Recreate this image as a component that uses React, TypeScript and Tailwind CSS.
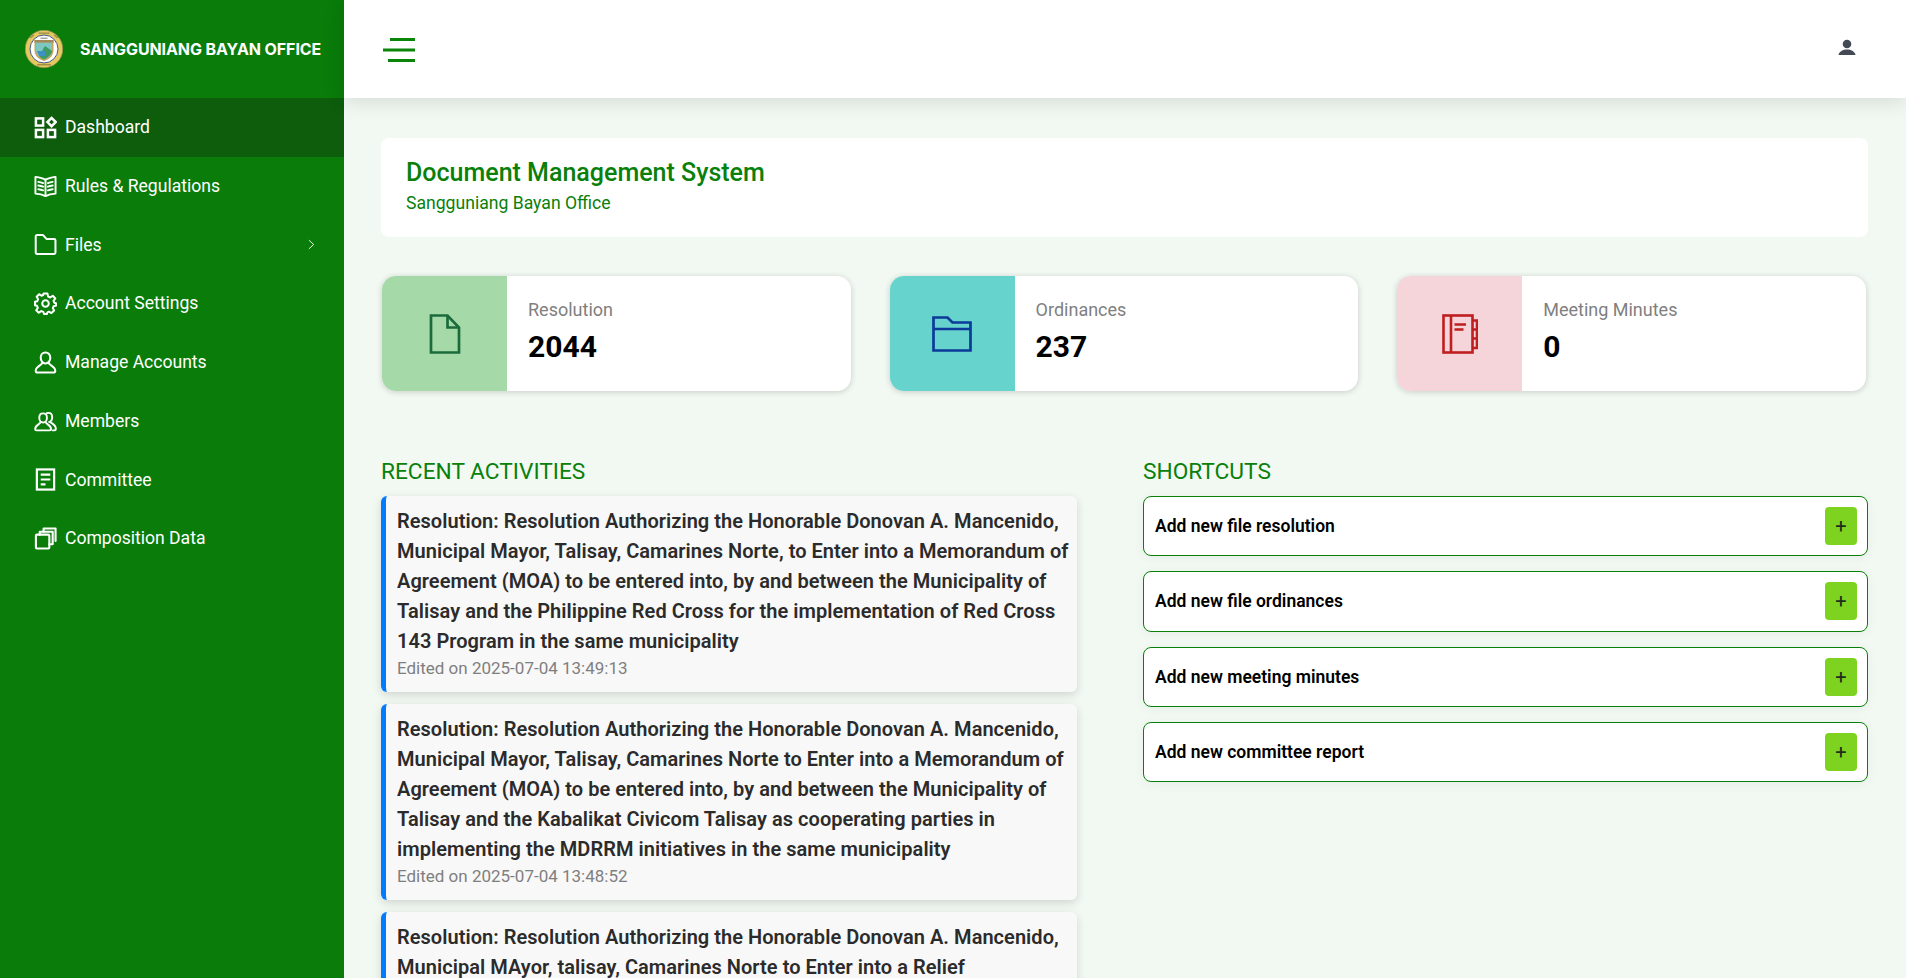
import React from "react";

const S = { fill: "none", stroke: "currentColor", strokeWidth: 2, strokeLinejoin: "round" as const, strokeLinecap: "round" as const };
const box = "w-[23px] h-[23px] shrink-0";

const IDash = () => (
  <svg viewBox="0 0 24 24" className={box} {...S} strokeWidth={2.6} strokeLinejoin="miter">
    <rect x="2" y="2.500" width="7.500" height="7.500" />
    <rect x="2" y="14.500" width="7.500" height="7.500" />
    <rect x="14.500" y="14.500" width="7.500" height="7.500" />
    <path d="M18.300 2 22.600 6.300 18.300 10.600 14 6.300Z" />
  </svg>
);
const IBook = () => (
  <svg viewBox="0 0 24 24" className={box} {...S} strokeWidth={2}>
    <path d="M12 5C9 3.200 5.500 2.600 1.500 2V19.400C5.500 19.600 9 20.400 12 22 15 20.400 18.500 19.600 22.500 19.400V2C18.500 2.600 15 3.200 12 5Z" />
    <path d="M12 5V22" />
    <path d="M4.500 7.200C6.500 7.400 8 7.800 9.500 8.400M4.500 11C6.500 11.200 8 11.600 9.500 12.200M4.500 14.800C6.500 15 8 15.400 9.500 16M19.500 7.200C17.500 7.400 16 7.800 14.500 8.400M19.500 11C17.500 11.200 16 11.600 14.500 12.200M19.500 14.800C17.500 15 16 15.400 14.500 16" />
  </svg>
);
const IFolder = () => (
  <svg viewBox="0 0 24 24" className={box} {...S} strokeWidth={2.100}>
    <path d="M1.800 3.500C1.800 2.700 2.400 2 3.200 2H9.200L13 6.200H21C21.800 6.200 22.400 6.900 22.400 7.700V20.300C22.400 21.100 21.800 21.800 21 21.800H3.200C2.400 21.800 1.800 21.100 1.800 20.300Z" />
  </svg>
);
const IGear = () => (
  <svg viewBox="0 0 24 24" className={box} {...S} strokeWidth={2.100}>
    <circle cx="12" cy="12" r="3.400" />
    <path d="M10 1.500H14L14.700 4.700 16.900 5.700 19.600 3.900 22.200 6.700 20.400 9.300 21.200 11.200 23 11.800V14.200L20.500 14.800 19.700 16.900 21 19.400 18.200 22 15.600 20.500 14 21.200 13.500 23H10.500L9.800 20.800 7.600 19.900 5 21.600 2.300 19 4 16.500 3.100 14.400 1 13.800V10.200L3.400 9.600 4.300 7.500 2.800 5 5.400 2.300 7.800 3.900 9.600 3.100Z" />
  </svg>
);
const IUser = () => (
  <svg viewBox="0 0 24 24" className={box} {...S} strokeWidth={2.100}>
    <path d="M12 1.500C8.900 1.500 7 4 7 7 7 9.800 8.800 13 12 13 15.200 13 17 9.800 17 7 17 4 15.100 1.500 12 1.500Z" />
    <path d="M8.800 12C8.800 14.800 2 15.400 1.800 20.500 1.800 21.600 2.400 22.400 3.400 22.400H20.600C21.600 22.400 22.200 21.600 22.200 20.500 22 15.400 15.200 14.800 15.200 12" />
  </svg>
);
const IMembers = () => (
  <svg viewBox="0 0 24 24" className={box} {...S} strokeWidth={2}>
    <path d="M9.500 3.500C7 3.500 5.500 5.500 5.500 8 5.500 10.500 7 13 9.500 13 12 13 13.500 10.500 13.500 8 13.500 5.500 12 3.500 9.500 3.500Z" />
    <path d="M6.800 12.500C6.800 14.800 1.300 15.500 1.200 19.800 1.200 20.800 1.800 21.300 2.600 21.300H16.400C17.200 21.300 17.800 20.800 17.800 19.800 17.700 15.500 12.200 14.800 12.200 12.500" />
    <path d="M13.500 3.300C13.900 3.100 14.500 3 15 3 17.500 3 19 5 19 7.500 19 9.700 17.800 12 15.800 12.500" />
    <path d="M16.800 12.500C18 14 22.800 15 22.800 19.800 22.800 20.800 22.200 21.300 21.400 21.300H19.500" />
  </svg>
);
const ICommittee = () => (
  <svg viewBox="0 0 24 24" className={box} {...S} strokeWidth={2.300} strokeLinejoin="miter" strokeLinecap="butt">
    <rect x="3" y="1.500" width="18" height="21" />
    <path d="M7 7H17M7 12H17M7 17H12" />
  </svg>
);
const ICopies = () => (
  <svg viewBox="0 0 24 24" className={box} {...S} strokeWidth={2.200}>
    <rect x="2" y="8" width="14" height="14.500" rx="1" />
    <path d="M6 8V5H19.500V18H16" />
    <path d="M10 4.800V1.500H22.500V14.500" />
  </svg>
);

const Logo = () => (
  <svg viewBox="0 0 38 38" className="w-[38px] h-[38px] shrink-0">
    <circle cx="19" cy="19" r="18.800" fill="#e6c95e" />
    <circle cx="19" cy="19" r="18.800" fill="none" stroke="#8f8a55" strokeWidth="0.700" />
    <circle cx="19" cy="19" r="14" fill="#ffffff" stroke="#46568c" strokeWidth="1" />
    <path d="M9.500 10H28.500V20C28.500 26 24 29.500 19 31 14 29.500 9.500 26 9.500 20Z" fill="#c5a35a" />
    <path d="M11 12.500H27V20C27 25 23 28 19 29.500 15 28 11 25 11 20Z" fill="#7cc7c2" />
    <path d="M20 16 27 21V22C25 26 22 28 19 29.500 17 28.500 15 27.500 14 26Z" fill="#3f9a63" />
    <path d="M12 21H20V26H14Z" fill="#3d8fc5" />
    <path d="M9.500 10H28.500V12.500H9.500Z" fill="#a3895a" />
    <path d="M13.500 2.500H24.500V3.800H13.500Z" fill="#5a5a3c" opacity="0.550" />
    <path d="M5 8 9 5M29 5 33 8" stroke="#6a6640" strokeWidth="1.300" opacity="0.600" />
    <path d="M12 34H26V35.500H12Z" fill="#7a6a3c" opacity="0.600" />
    <path d="M15.500 7.500H22.500V9H15.500Z" fill="#6a6a6a" opacity="0.600" />
  </svg>
);

const IDoc = () => (
  <svg viewBox="0 0 32 40" className="w-[32px] h-[40px]" fill="none" stroke="#1b6b3c" strokeWidth="2.700" strokeLinejoin="miter">
    <path d="M2 1.500H18.500L30 13.500V38.500H2Z" />
    <path d="M18.500 1.500V13.500H30" />
  </svg>
);
const IFolder2 = () => (
  <svg viewBox="0 0 40 36" className="w-[40px] h-[36px]" fill="none" stroke="#0b3a9a" strokeWidth="2.700" strokeLinejoin="miter">
    <path d="M1.500 1.500H15.500L20.500 6.500H38.500V34.500H1.500Z" />
    <path d="M1.500 13H38.500" />
  </svg>
);
const INote = () => (
  <svg viewBox="0 0 36 40" className="w-[36px] h-[40px]" fill="none" stroke="#bf1f1f" strokeWidth="2.600" strokeLinejoin="miter">
    <rect x="1.500" y="1.500" width="29" height="37" />
    <path d="M9 1.500V38.500" />
    <path d="M12.500 10.500H24M12.500 15.500H21.500" />
    <path d="M30.500 6.500H35V34H30.500M30.500 15.500H35M30.500 24.500H35" />
  </svg>
);

const nav: [string, React.ReactNode, boolean?, boolean?][] = [
  ["Dashboard", <IDash />, true],
  ["Rules & Regulations", <IBook />],
  ["Files", <IFolder />, false, true],
  ["Account Settings", <IGear />],
  ["Manage Accounts", <IUser />],
  ["Members", <IMembers />],
  ["Committee", <ICommittee />],
  ["Composition Data", <ICopies />],
];

const stats: [string, string, string, React.ReactNode][] = [
  ["Resolution", "2044", "bg-[#a5d9a7]", <IDoc />],
  ["Ordinances", "237", "bg-[#67d3cd]", <IFolder2 />],
  ["Meeting Minutes", "0", "bg-[#f6d5da]", <INote />],
];

const activities: [string, string][] = [
  [
    "Resolution: Resolution Authorizing the Honorable Donovan A. Mancenido, Municipal Mayor, Talisay, Camarines Norte, to Enter into a Memorandum of Agreement (MOA) to be entered into, by and between the Municipality of Talisay and the Philippine Red Cross for the implementation of Red Cross 143 Program in the same municipality",
    "Edited on 2025-07-04 13:49:13",
  ],
  [
    "Resolution: Resolution Authorizing the Honorable Donovan A. Mancenido, Municipal Mayor, Talisay, Camarines Norte to Enter into a Memorandum of Agreement (MOA) to be entered into, by and between the Municipality of Talisay and the Kabalikat Civicom Talisay as cooperating parties in implementing the MDRRM initiatives in the same municipality",
    "Edited on 2025-07-04 13:48:52",
  ],
  [
    "Resolution: Resolution Authorizing the Honorable Donovan A. Mancenido, Municipal MAyor, talisay, Camarines Norte to Enter into a Relief",
    "",
  ],
];

const shortcuts = ["Add new file resolution", "Add new file ordinances", "Add new meeting minutes", "Add new committee report"];

export default function App() {
  return (
    <div className="flex h-screen overflow-hidden bg-[#f2f8f2] font-['Roboto',sans-serif]">
      <aside className="w-[344px] shrink-0 bg-[#097c0a] text-white">
        <div className="h-[98px] flex items-center pl-[25px] gap-[17px]">
          <Logo />
          <span className="font-['Inter',sans-serif] font-bold text-[16px] tracking-[-0.1px] whitespace-nowrap">SANGGUNIANG BAYAN OFFICE</span>
        </div>
        <nav>
          {nav.map(([label, icon, active, chev]) => (
            <div key={label} className={`h-[58.750px] flex items-center pl-[34px] pr-[29px] gap-[8px] text-[17.6px] tracking-[-0.02px] ${active ? "bg-[#0d5d0c]" : ""}`}>
              {icon}
              <span className="flex-1">{label}</span>
              {chev && (
                <svg viewBox="0 0 8 12" className="w-[7px] h-[11px]" fill="none" stroke="currentColor" strokeWidth="1">
                  <path d="M1 1 6.500 6 1 11" />
                </svg>
              )}
            </div>
          ))}
        </nav>
      </aside>
      <div className="flex-1 min-w-0 flex flex-col">
        <header className="relative z-10 h-[98px] shrink-0 bg-white shadow-[0_4px_20px_rgba(0,0,0,0.12)] flex items-center justify-between pr-[38px]">
          <svg viewBox="0 0 32 24" className="ml-[39px] mt-[2px] w-[32px] h-[24px]" fill="none" stroke="#098509" strokeWidth="3">
            <path d="M7 1.500H32M0 12H32M5 22.500H32" />
          </svg>
          <svg viewBox="0 0 24 24" className="mr-[9.500px] -mt-[2px] w-[24px] h-[24px]" fill="#434a54">
            <circle cx="12" cy="8" r="4.300" />
            <path d="M3.500 19C4 15.500 8 13.500 12 13.500S20 15.500 20.500 19Z" />
          </svg>
        </header>
        <main className="flex-1 min-h-0 overflow-hidden pl-[37px] pr-[38px] pt-[40px]">
          <section className="h-[99px] bg-white rounded-[8px] pl-[25px] pt-[18px] text-[#098009]">
            <h1 className="text-[25px] leading-[34px] font-medium">Document Management System</h1>
            <p className="mt-[1px] text-[17.6px] leading-[24px]">Sangguniang Bayan Office</p>
          </section>
          <section className="mt-[39px] pl-[1px] pr-[2px] grid grid-cols-3 gap-[38.800px]">
            {stats.map(([label, value, color, icon]) => (
              <div key={label} className="h-[115px] flex bg-white rounded-[14px] overflow-hidden shadow-[0_1px_6px_rgba(0,0,0,0.18)]">
                <div className={`w-[125px] flex items-center justify-center ${color}`}>{icon}</div>
                <div className="pl-[21px] pt-[22px]">
                  <div className="text-[18px] leading-[24px] text-[#7f7f7f]">{label}</div>
                  <div className="mt-[3px] text-[30px] leading-[44px] font-bold text-black">{value}</div>
                </div>
              </div>
            ))}
          </section>
          <section className="mt-[66px] flex gap-[66px] items-start">
            <div className="w-[696px] shrink-0">
              <h2 className="text-[22.700px] leading-[30px] text-[#098009] mb-[9px]">RECENT ACTIVITIES</h2>
              <div className="flex flex-col gap-[12px]">
                {activities.map(([title, meta]) => (
                  <article key={title} className="bg-[#f8f8f8] border-l-[5px] border-[#007bff] rounded-[6px] shadow-[0_3px_10px_rgba(0,0,0,0.14)] pl-[11px] pr-[7px] pt-[10px] pb-[13px]">
                    <p className="text-[20px] leading-[30px] font-semibold tracking-[0.04px] text-[#2b2b2b]">{title}</p>
                    {meta && <p className="mt-[1px] text-[17px] leading-[22px] text-[#7f7f7f]">{meta}</p>}
                  </article>
                ))}
              </div>
            </div>
            <div className="flex-1 min-w-0">
              <h2 className="text-[22.700px] leading-[30px] text-[#098009] mb-[9px]">SHORTCUTS</h2>
              <div className="flex flex-col gap-[15px]">
                {shortcuts.map((s) => (
                  <div key={s} className="h-[60.300px] bg-white border border-[#098009] rounded-[8px] flex items-center justify-between pl-[11px] pr-[10px] shadow-[0_2px_12px_rgba(0,0,0,0.05)]">
                    <span className="text-[17.5px] font-semibold text-black">{s}</span>
                    <span className="w-[32px] h-[38px] bg-[#7ed321] rounded-[4px] flex items-center justify-center text-[20px] text-[#1f2d1f]">+</span>
                  </div>
                ))}
              </div>
            </div>
          </section>
        </main>
      </div>
    </div>
  );
}
